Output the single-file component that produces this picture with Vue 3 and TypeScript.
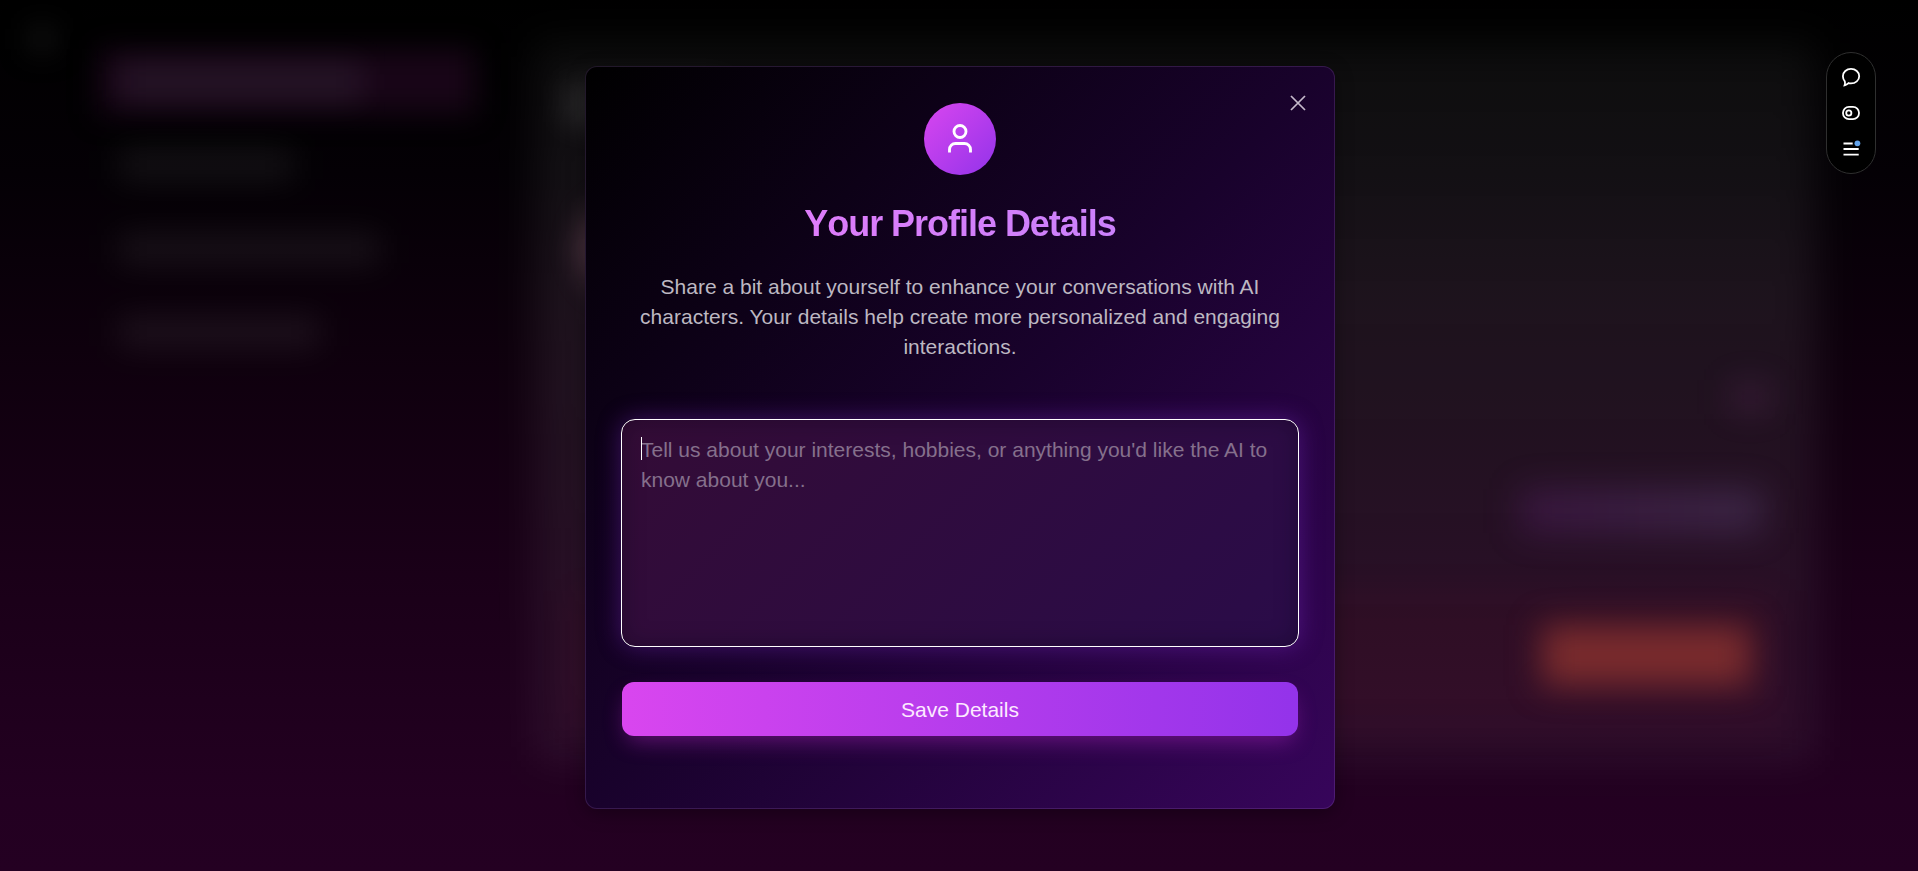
<script setup lang="ts">
import { ref } from 'vue';

interface NavRow {
  width: number;
  active?: boolean;
}

const rows: NavRow[] = [
  { width: 246, active: true },
  { width: 176 },
  { width: 262 },
  { width: 202 },
];

const open = ref(true);
const details = ref('');
</script>

<template>
  <div class="page">
    <div class="backdrop" aria-hidden="true">
      <div class="logo"></div>
      <div class="sidebar">
        <div v-for="(row, i) in rows" :key="i" class="nav-row" :class="{ active: row.active }">
          <div class="nav-label" :style="{ width: row.width + 'px' }"></div>
        </div>
      </div>
      <div class="panel">
        <div class="heading"></div>
        <div class="avatar"></div>
        <div class="toggle"></div>
        <div class="pill"></div>
        <div class="danger-zone">
          <div class="danger-button"></div>
        </div>
      </div>
    </div>

    <div v-if="open" class="overlay">
      <div class="modal" role="dialog">
        <button class="close" aria-label="Close" @click="open = false">
          <svg viewBox="0 0 24 24" width="28" height="28">
            <path d="M18 6 6 18M6 6l12 12" />
          </svg>
        </button>

        <div class="badge">
          <svg viewBox="0 0 24 24" width="36" height="36">
            <path d="M19 21v-2a4 4 0 0 0-4-4H9a4 4 0 0 0-4 4v2" />
            <circle cx="12" cy="7" r="4" />
          </svg>
        </div>

        <h2>Your Profile Details</h2>
        <p>
          Share a bit about yourself to enhance your conversations with AI characters. Your details help
          create more personalized and engaging interactions.
        </p>

        <div class="field">
          <textarea
            v-model="details"
            spellcheck="false"
            placeholder="Tell us about your interests, hobbies, or anything you'd like the AI to know about you..."
          ></textarea>
          <span class="caret"></span>
        </div>

        <button class="save">Save Details</button>
      </div>
    </div>

    <div class="toolbar">
      <svg viewBox="0 0 20 20" width="20" height="20">
        <path d="M3.600 18.300c.5-1.300.6-2.800.2-4A7.600 7.600 0 0 1 1.900 9.300C1.900 5 5.500 1.900 10 1.900s8.200 3.200 8.200 7.300-3.700 7.200-8.200 7.200c-.9 0-1.700-.1-2.500-.3-1.100 1-2.300 1.800-3.900 2.200Z" />
      </svg>
      <svg viewBox="0 0 20 20" width="20" height="20">
        <rect x="2" y="3.800" width="16" height="12.400" rx="6" />
        <circle cx="7.800" cy="10" r="2.600" />
      </svg>
      <svg viewBox="0 0 20 20" width="20" height="20">
        <path d="M2.500 4.500h9.200M2.500 10h15.200M2.500 15.700h15.200" />
        <circle class="dot" cx="16.400" cy="4.300" r="2.900" />
      </svg>
    </div>
  </div>
</template>

<style>
html,
body {
  background: #000;
  overflow: hidden;
}
</style>

<style scoped>
.page {
  position: relative;
  height: 871px;
  overflow: hidden;
  font-family: 'Liberation Sans', Arial, sans-serif;
  font-size: 21px;
  line-height: 30px;
  background: linear-gradient(180deg, #000 0%, #040005 20%, #0e000d 40%, #1a0018 66%, #230021 92%, #240022 100%);
}

.page * {
  box-sizing: border-box;
}

.backdrop {
  display: flex;
  height: 100%;
}

.logo {
  position: absolute;
  left: 30px;
  top: 27px;
  width: 24px;
  height: 24px;
  background: #141414;
  filter: blur(14px);
}

.sidebar {
  display: flex;
  flex-direction: column;
  gap: 10.500px;
  width: 376px;
  margin: 45px 0 0 99px;
}

.nav-row {
  display: flex;
  align-items: center;
  height: 73px;
  position: relative;
  padding-left: 19px;
}

.nav-row.active::before {
  content: '';
  position: absolute;
  inset: 4px 0;
  background: #180517;
  filter: blur(14px);
}

.nav-label {
  height: 30px;
  background: rgba(255, 255, 255, 0.07);
  filter: blur(16px);
}

.nav-row.active .nav-label {
  height: 40px;
  background: rgba(225, 235, 255, 0.065);
}

.panel {
  position: relative;
  width: 1281px;
  height: 718px;
  margin: 43px 0 0 60px;
}

.panel::before {
  content: '';
  position: absolute;
  inset: 0;
  background: linear-gradient(180deg, rgba(255, 255, 255, 0.05), rgba(255, 255, 255, 0.075) 35%, rgba(255, 255, 255, 0.055));
  filter: blur(20px);
}

.heading,
.avatar,
.toggle,
.pill,
.danger-zone,
.danger-button {
  position: absolute;
}

.heading {
  left: 32px;
  top: 43px;
  width: 160px;
  height: 36px;
  background: rgba(255, 255, 255, 0.14);
  filter: blur(17px);
}

.avatar {
  left: 48px;
  top: 158px;
  width: 94px;
  height: 94px;
  border-radius: 50%;
  background: rgba(255, 170, 200, 0.34);
  filter: blur(16px);
}

.toggle {
  right: 44px;
  top: 337px;
  width: 44px;
  height: 34px;
  background: rgba(200, 80, 200, 0.1);
  filter: blur(16px);
}

.pill {
  right: 54px;
  top: 446px;
  width: 242px;
  height: 44px;
  background: linear-gradient(90deg, rgba(120, 40, 150, 0.24), rgba(120, 95, 160, 0.27));
  filter: blur(17px);
}

.danger-zone {
  left: 36px;
  right: 36px;
  top: 548px;
  height: 140px;
}

.danger-zone::before {
  content: '';
  position: absolute;
  inset: 0;
  background: rgba(255, 0, 10, 0.03);
  filter: blur(18px);
}

.danger-button {
  right: 29px;
  top: 34px;
  width: 209px;
  height: 61px;
  background: #792b2d;
  filter: blur(16px);
}

.overlay {
  position: absolute;
  inset: 4px 0 0 2px;
  display: flex;
  align-items: center;
  justify-content: center;
}

.modal {
  position: relative;
  display: flex;
  flex-direction: column;
  align-items: center;
  width: 750px;
  height: 743px;
  padding: 36px;
  border: 1px solid rgba(180, 130, 225, 0.19);
  border-radius: 12px;
  background: linear-gradient(135deg, #000 0%, #19022c 50%, #37055b 100%) border-box;
  box-shadow: 0 4px 18px rgba(0, 0, 0, 0.35);
}

button {
  font: inherit;
  border: 0;
  padding: 0;
}

.close {
  position: absolute;
  top: 22px;
  right: 22px;
  display: flex;
  background: none;
}

.close svg {
  fill: none;
  stroke: #c5bacb;
  stroke-width: 1.5;
}

.badge {
  display: flex;
  align-items: center;
  justify-content: center;
  flex: none;
  width: 72px;
  height: 72px;
  border-radius: 50%;
  background: linear-gradient(135deg, #d946ef, #9333ea);
}

.badge svg {
  fill: none;
  stroke: #fff;
  stroke-width: 1.9;
}

h2 {
  width: 100%;
  margin: 27px 0 0;
  font-size: 36px;
  line-height: 43px;
  letter-spacing: -1.030px;
  font-kerning: none;
  text-align: center;
  color: transparent;
  background: linear-gradient(90deg, #e879f9, #c084fc);
  background-clip: text;
  -webkit-background-clip: text;
}

p {
  margin: 27px 0 0;
  text-align: center;
  color: #bdb8c2;
}

.field {
  position: relative;
  flex: none;
  width: 678px;
  height: 228px;
  margin-top: 57px;
}

textarea {
  display: block;
  width: 100%;
  height: 100%;
  padding: 15px 19px;
  border: 1px solid #fff;
  border-radius: 14px;
  outline: none;
  resize: none;
  font: inherit;
  color: #fff;
  background: linear-gradient(135deg, #330c36, #2a0c49);
  box-shadow: 0 0 24px rgba(147, 51, 234, 0.34), inset 0 0 22px rgba(10, 0, 20, 0.35);
}

textarea::placeholder {
  color: #85708c;
  opacity: 1;
}

.caret {
  position: absolute;
  left: 20px;
  top: 18px;
  width: 1px;
  height: 23px;
  background: #fff;
}

.save {
  flex: none;
  width: 100%;
  height: 54px;
  margin-top: 35px;
  padding-top: 2px;
  border-radius: 12px;
  color: #fdeaff;
  background: linear-gradient(90deg, #d946ef, #9333ea);
  box-shadow: 0 10px 22px -5px rgba(192, 38, 211, 0.42);
}

.toolbar {
  position: absolute;
  left: 1826px;
  top: 52px;
  display: flex;
  flex-direction: column;
  align-items: center;
  gap: 16px;
  width: 50px;
  height: 122px;
  padding-top: 14px;
  border: 1px solid #2f2f2f;
  border-radius: 25px;
  background: #000;
}

.toolbar svg {
  fill: none;
  stroke: #fff;
  stroke-width: 1.8;
}

.toolbar .dot {
  fill: #62a2ea;
  stroke: none;
}
</style>
